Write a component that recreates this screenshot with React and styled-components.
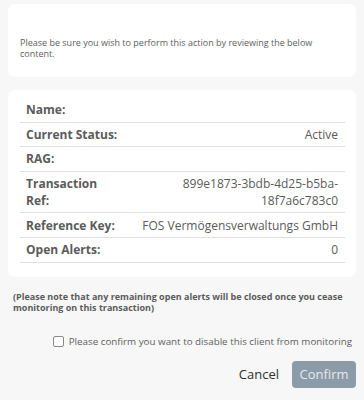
import React from "react";
import styled, { createGlobalStyle } from "styled-components";

const GlobalStyle = createGlobalStyle`
  html, body {
    margin: 0;
    padding: 0;
    background: #f7f7f7;
  }
  body {
    font-family: "Open Sans", "Liberation Sans", sans-serif;
    color: #5b5b5b;
  }
`;

const Page = styled.div`
  width: 364px;
  height: 400px;
  box-sizing: border-box;
  padding: 4px 8px 0 8px;
  display: flex;
  flex-direction: column;
`;

const Card = styled.div`
  background: #ffffff;
  border-radius: 7px;
  box-sizing: border-box;
  padding: ${(p) => p.$pad};
  margin-top: ${(p) => p.$gap || 0}px;
`;

const Intro = styled.p`
  margin: 0;
  font-size: 9px;
  line-height: 11px;
  color: #5e5e5e;
`;

const Table = styled.div`
  display: flex;
  flex-direction: column;
`;

const Row = styled.div`
  display: grid;
  grid-template-columns: 94px 1fr;
  column-gap: 8px;
  padding: 3.3px 7px 3.3px 6px;
  border-bottom: 1px solid #dedfe2;
  font-size: 12px;
  line-height: 17px;
`;

const Label = styled.div`
  font-weight: 700;
  color: #5b5b5b;
`;

const Value = styled.div`
  text-align: right;
  color: #5b5b5b;
`;

const Note = styled.p`
  margin: 14px 0 0 5px;
  font-size: 9px;
  line-height: 11px;
  font-weight: 700;
  color: #5b5b5b;
`;

const Confirmation = styled.label`
  display: flex;
  align-items: center;
  justify-content: flex-end;
  gap: 5px;
  margin-top: 22px;
  padding-right: 4px;
  font-size: 9.8px;
  color: #5e5e5e;
`;

const Box = styled.span`
  width: 9px;
  height: 9px;
  border: 1px solid #8a8a8a;
  border-radius: 2px;
  background: #fff;
`;

const Actions = styled.div`
  display: flex;
  justify-content: flex-end;
  align-items: center;
  gap: 13px;
  margin-top: 13px;
`;

const TextButton = styled.button`
  border: none;
  background: none;
  padding: 0;
  font-family: inherit;
  font-size: 13px;
  color: #2f2f2f;
`;

const PrimaryButton = styled.button`
  border: none;
  border-radius: 4px;
  background: #8b9ba8;
  color: #e6eaee;
  font-family: inherit;
  font-size: 13px;
  width: 64px;
  height: 27px;
  padding: 0;
`;

const rows = [
  ["Name:", ""],
  ["Current Status:", "Active"],
  ["RAG:", ""],
  ["Transaction Ref:", "899e1873-3bdb-4d25-b5ba-18f7a6c783c0"],
  ["Reference Key:", "FOS Vermögensverwaltungs GmbH"],
  ["Open Alerts:", "0"],
];

export default function App() {
  return (
    <>
      <GlobalStyle />
      <Page>
        <Card $pad="33px 12px 18px 12px">
          <Intro>
            Please be sure you wish to perform this action by reviewing the below content.
          </Intro>
        </Card>
        <Card $pad="8px 11px 14px 12px" $gap={13}>
          <Table>
            {rows.map(([label, value]) => (
              <Row key={label}>
                <Label>{label}</Label>
                <Value>{value}</Value>
              </Row>
            ))}
          </Table>
        </Card>
        <Note>
          (Please note that any remaining open alerts will be closed once you cease
          monitoring on this transaction)
        </Note>
        <Confirmation>
          <Box />
          Please confirm you want to disable this client from monitoring
        </Confirmation>
        <Actions>
          <TextButton>Cancel</TextButton>
          <PrimaryButton>Confirm</PrimaryButton>
        </Actions>
      </Page>
    </>
  );
}
